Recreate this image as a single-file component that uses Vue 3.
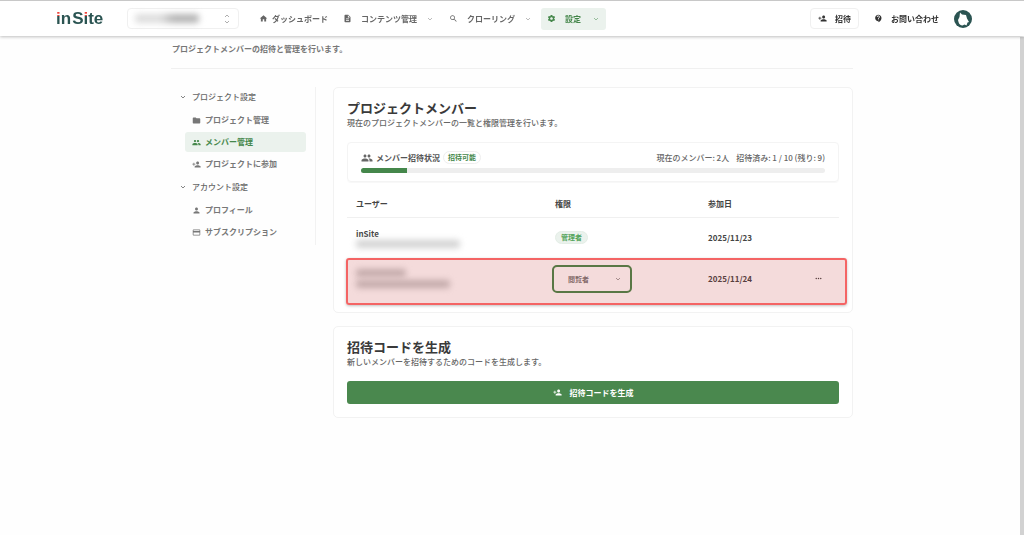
<script setup>
import { ref } from 'vue'

const icons = {
  home: 'M10 20v-6h4v6h5v-8h3L12 3 2 12h3v8z',
  doc: 'M14 2H6c-1.1 0-2 .9-2 2v16c0 1.1.9 2 2 2h12c1.1 0 2-.9 2-2V8l-6-6zm2 16H8v-2h8v2zm0-4H8v-2h8v2zm-3-5V3.5L18.5 9H13z',
  search: 'M15.5 14h-.79l-.28-.27C15.41 12.59 16 11.11 16 9.5 16 5.91 13.09 3 9.5 3S3 5.91 3 9.5 5.91 16 9.5 16c1.61 0 3.09-.59 4.23-1.57l.27.28v.79l5 4.99L20.49 19l-4.99-5zm-6 0C7.01 14 5 11.99 5 9.5S7.01 5 9.5 5 14 7.01 14 9.5 11.99 14 9.5 14z',
  gear: 'M19.14 12.94c.04-.3.06-.61.06-.94 0-.32-.02-.64-.07-.94l2.03-1.58c.18-.14.23-.41.12-.61l-1.92-3.32c-.12-.22-.37-.29-.59-.22l-2.39.96c-.5-.38-1.03-.7-1.62-.94l-.36-2.54c-.04-.24-.24-.41-.48-.41h-3.84c-.24 0-.43.17-.47.41l-.36 2.54c-.59.24-1.13.57-1.62.94l-2.39-.96c-.22-.08-.47 0-.59.22L2.74 8.87c-.12.21-.08.47.12.61l2.03 1.58c-.05.3-.09.63-.09.94s.02.64.07.94l-2.03 1.58c-.18.14-.23.41-.12.61l1.92 3.32c.12.22.37.29.59.22l2.39-.96c.5.38 1.03.7 1.62.94l.36 2.54c.05.24.24.41.48.41h3.84c.24 0 .44-.17.47-.41l.36-2.54c.59-.24 1.13-.56 1.62-.94l2.39.96c.22.08.47 0 .59-.22l1.92-3.32c.12-.22.07-.47-.12-.61l-2.01-1.58zM12 15.6c-1.98 0-3.6-1.62-3.6-3.6s1.62-3.6 3.6-3.6 3.6 1.62 3.6 3.6-1.62 3.6-3.6 3.6z',
  folder: 'M10 4H4c-1.1 0-2 .9-2 2v12c0 1.1.9 2 2 2h16c1.1 0 2-.9 2-2V8c0-1.1-.9-2-2-2h-8l-2-2z',
  group: 'M16 11c1.66 0 2.99-1.34 2.99-3S17.66 5 16 5s-3 1.34-3 3 1.34 3 3 3zm-8 0c1.66 0 2.99-1.34 2.99-3S9.66 5 8 5 5 6.34 5 8s1.34 3 3 3zm0 2c-2.33 0-7 1.17-7 3.5V19h14v-2.5c0-2.33-4.67-3.5-7-3.5zm8 0c-.29 0-.62.02-.97.05 1.16.84 1.97 1.97 1.97 3.45V19h6v-2.5c0-2.33-4.67-3.5-7-3.5z',
  add: 'M15 12c2.21 0 4-1.79 4-4s-1.79-4-4-4-4 1.79-4 4 1.79 4 4 4zm-9-2V7H4v3H1v2h3v3h2v-3h3v-2H6zm9 4c-2.67 0-8 1.34-8 4v2h16v-2c0-2.66-5.33-4-8-4z',
  person: 'M12 12c2.21 0 4-1.79 4-4s-1.79-4-4-4-4 1.79-4 4 1.79 4 4 4zm0 2c-2.67 0-8 1.34-8 4v2h16v-2c0-2.66-5.33-4-8-4z',
  card: 'M20 4H4c-1.11 0-2 .89-2 2v12c0 1.11.89 2 2 2h16c1.11 0 2-.89 2-2V6c0-1.11-.89-2-2-2zm0 14H4v-6h16v6zm0-10H4V6h16v2z',
  help: 'M11.5 2C6.81 2 3 5.81 3 10.5S6.81 19 11.5 19h.5v3c4.86-2.34 8-7 8-11.5C20 5.81 16.19 2 11.5 2zm1 14.5h-2v-2h2v2zm0-3.5h-2c0-3.25 3-3 3-5 0-1.1-.9-2-2-2s-2 .9-2 2h-2c0-2.21 1.79-4 4-4s4 1.79 4 4c0 2.5-3 2.75-3 5z',
  more: 'M6 10c-1.1 0-2 .9-2 2s.9 2 2 2 2-.9 2-2-.9-2-2-2zm12 0c-1.1 0-2 .9-2 2s.9 2 2 2 2-.9 2-2-.9-2-2-2zm-6 0c-1.1 0-2 .9-2 2s.9 2 2 2 2-.9 2-2-.9-2-2-2z',
}

const nav = [
  { label: 'コンテンツ管理', icon: 'doc' },
  { label: 'クローリング', icon: 'search' },
  { label: '設定', icon: 'gear', active: true },
]

const groups = [
  {
    label: 'プロジェクト設定',
    items: [
      { label: 'プロジェクト管理', icon: 'folder' },
      { label: 'メンバー管理', icon: 'group', active: true },
      { label: 'プロジェクトに参加', icon: 'add' },
    ],
  },
  {
    label: 'アカウント設定',
    items: [
      { label: 'プロフィール', icon: 'person' },
      { label: 'サブスクリプション', icon: 'card' },
    ],
  },
]

const invited = 1
const limit = 10
const role = ref('閲覧者')
</script>

<template>
  <div class="page">
    <header class="topbar">
      <a class="logo" href="#"><span class="dot">i</span>n<span class="cap">S</span><span class="dot">i</span>te</a>
      <button class="picker" type="button" aria-label="プロジェクト">
        <span class="masked"></span>
        <svg class="updown" viewBox="0 0 8 12"><path d="M2 4l2-2 2 2M2 8l2 2 2-2" /></svg>
      </button>
      <nav class="nav">
        <a class="nav-item home" href="#">
          <svg class="icon" viewBox="0 0 24 24"><path :d="icons.home" /></svg>ダッシュボード
        </a>
        <button v-for="n in nav" :key="n.label" class="nav-item" :class="{ active: n.active }" type="button">
          <svg class="icon" viewBox="0 0 24 24"><path :d="icons[n.icon]" /></svg>{{ n.label }}
          <svg class="chevron" viewBox="0 0 8 8"><path d="M2 3l2 2 2-2" /></svg>
        </button>
      </nav>
      <div class="actions">
        <button class="invite" type="button">
          <svg class="icon" viewBox="0 0 24 24"><path :d="icons.add" /></svg>招待
        </button>
        <a class="contact" href="#">
          <svg class="icon" viewBox="0 0 24 24"><path :d="icons.help" /></svg>お問い合わせ
        </a>
        <button class="avatar" type="button" aria-label="アカウント">
          <svg viewBox="0 0 18 18">
            <circle cx="9" cy="9" r="9" fill="#2b5452" />
            <path d="M6 2.5L8 4.5 12 5 13 8.500 15 12 13.500 12.500 12.500 15.500 10.500 14.500 8.500 15.500C6.500 15.500 5 14 4.500 12L4 10 5.500 7z" fill="#fff" />
          </svg>
        </button>
      </div>
    </header>

    <div class="container">
      <p class="lead">プロジェクトメンバーの招待と管理を行います。</p>
      <div class="columns">
        <aside class="sidebar">
          <section v-for="g in groups" :key="g.label" class="group">
            <button class="group-head" type="button">
              <svg class="chevron" viewBox="0 0 8 8"><path d="M2 3l2 2 2-2" /></svg>{{ g.label }}
            </button>
            <a v-for="i in g.items" :key="i.label" class="side-item" :class="{ active: i.active }" href="#">
              <svg class="icon" viewBox="0 0 24 24"><path :d="icons[i.icon]" /></svg>{{ i.label }}
            </a>
          </section>
        </aside>

        <main class="main">
          <section class="card">
            <h2>プロジェクトメンバー</h2>
            <p class="sub">現在のプロジェクトメンバーの一覧と権限管理を行います。</p>
            <div class="status">
              <div class="status-row">
                <svg class="icon large" viewBox="0 0 24 24"><path :d="icons.group" /></svg>
                <span class="status-title">メンバー招待状況</span>
                <span class="chip outline">招待可能</span>
                <span class="counts"><span>現在のメンバー: 2人</span><span>招待済み: {{ invited }} / {{ limit }} (残り: {{ limit - invited }})</span></span>
              </div>
              <div class="track"><div class="fill" :style="{ width: (invited / limit) * 100 + '%' }"></div></div>
            </div>
            <table>
              <thead>
                <tr><th class="c-user">ユーザー</th><th class="c-role">権限</th><th>参加日</th><th class="c-menu"></th></tr>
              </thead>
              <tbody>
                <tr>
                  <td><div class="name">inSite</div><div class="masked mail"></div></td>
                  <td><span class="chip solid">管理者</span></td>
                  <td>2025/11/23</td>
                  <td></td>
                </tr>
                <tr class="marked">
                  <td><div class="masked short"></div><div class="masked mail2"></div></td>
                  <td class="role-cell">
                    <div class="role">
                      <select v-model="role" aria-label="権限"><option>閲覧者</option><option>管理者</option></select>
                      <svg class="chevron" viewBox="0 0 8 8"><path d="M2 3l2 2 2-2" /></svg>
                    </div>
                  </td>
                  <td>2025/11/24</td>
                  <td class="c-menu">
                    <button class="more" type="button" aria-label="メニュー"><svg class="icon" viewBox="0 0 24 24"><path :d="icons.more" /></svg></button>
                  </td>
                </tr>
              </tbody>
            </table>
          </section>

          <section class="card">
            <h2>招待コードを生成</h2>
            <p class="sub">新しいメンバーを招待するためのコードを生成します。</p>
            <button class="primary" type="button">
              <svg class="icon" viewBox="0 0 24 24"><path :d="icons.add" /></svg>招待コードを生成
            </button>
          </section>
        </main>
      </div>
    </div>
    <div class="scrollbar"></div>
  </div>
</template>

<style>
body { background: #fefefe; }
</style>

<style scoped>
.page {
  font-family: "Noto Sans CJK JP", "Noto Sans", sans-serif;
  font-size: 8px;
  line-height: 12px;
  font-weight: 500;
  color: #666;
}
.page * { box-sizing: border-box; }
button, select { font: inherit; color: inherit; background: none; border: 0; padding: 0; margin: 0; text-align: left; }
a { color: inherit; text-decoration: none; }
h2, p { margin: 0; }
svg { display: block; flex: none; }
.icon { width: 9px; height: 9px; fill: currentColor; }
.icon.large { width: 12px; height: 12px; }
.chevron { width: 8px; height: 8px; fill: none; stroke: currentColor; stroke-width: 0.8; }

.topbar {
  position: sticky;
  top: 0;
  z-index: 2;
  display: flex;
  align-items: center;
  height: 36px;
  padding: 0 52px 0 56px;
  background: #fff;
  border-top: 1px solid #c8c8c8;
  box-shadow: 0 1px 3px rgba(0, 0, 0, 0.25);
}
.logo {
  width: 71px;
  font: bold 17px/20px "Liberation Sans", Arial, sans-serif;
  color: #2b5452;
}
.dot {
  color: transparent;
  background: linear-gradient(#f0453c 7px, #2b5452 7px);
  background-clip: text;
}
.cap { margin-left: 1px; }
.picker {
  display: flex;
  align-items: center;
  justify-content: space-between;
  width: 112px;
  height: 21px;
  padding: 0 7px;
  border: 1px solid #f0f0f0;
  border-radius: 4px;
}
.masked { height: 8px; border-radius: 3px; background: #c4c4c4; filter: blur(3px); }
.picker .masked { width: 64px; height: 9px; background: linear-gradient(90deg, #ddd 40%, #b4b4b4 60%); }
.updown { width: 8px; height: 12px; fill: none; stroke: #999; stroke-width: 0.8; }
.nav { display: flex; gap: 3px; margin-left: 15px; }
.nav-item {
  display: flex;
  align-items: center;
  gap: 9px;
  height: 22px;
  padding: 0 6px;
  border-radius: 3px;
  font-weight: 700;
  white-space: nowrap;
}
.nav-item.home { gap: 4px; padding-left: 5px; }
.nav-item .chevron { margin-left: auto; color: #aaa; }
.nav-item.active { min-width: 65px; background: #ebf2ed; color: #45874b; }
.nav-item.active .chevron { color: #80b085; }
.actions { display: flex; align-items: center; margin-left: auto; color: #333; font-weight: 700; white-space: nowrap; }
.invite, .contact { display: flex; align-items: center; gap: 8px; }
.invite { height: 21px; padding: 0 7px; border: 1px solid #f0f0f0; border-radius: 4px; }
.contact { margin: 0 15px; }
.avatar, .avatar svg { width: 18px; height: 18px; }

.container { max-width: 682px; margin: 0 auto; }
.lead { padding: 7px 1px 13px; border-bottom: 1px solid #f0f0f0; font-weight: 700; color: #777; }
.columns { display: flex; gap: 17px; padding-top: 18px; }
.sidebar { flex: 0 0 145px; align-self: flex-start; padding: 0 9px 0 8px; border-right: 1px solid #f2f2f2; }
.group { display: flex; flex-direction: column; gap: 2px; padding-bottom: 3px; }
.group-head { display: flex; align-items: center; gap: 5px; height: 20px; margin-bottom: 1px; }
.side-item {
  display: flex;
  align-items: center;
  gap: 4px;
  height: 20px;
  margin-left: 6px;
  padding-left: 7px;
  border-radius: 3px;
  font-weight: 700;
  color: #777;
}
.side-item.active { background: #ebf2ed; color: #45874b; }

.main { flex: 1; min-width: 0; display: flex; flex-direction: column; gap: 13px; }
.card { padding: 11px 13px 13px; border: 1px solid #f2f2f2; border-radius: 5px; background: #fff; }
h2 { font-size: 13px; line-height: 18px; font-weight: 700; color: #3a3a3a; }
.sub { color: #666; }
.status {
  margin-top: 13px;
  padding: 8px 13px;
  border: 1px solid #f4f4f4;
  border-radius: 4px;
  box-shadow: 0 1px 1px rgba(0, 0, 0, 0.03);
}
.status-row { display: flex; align-items: center; height: 13px; margin-bottom: 4px; }
.status-title { margin: 0 3px 0 3px; font-weight: 700; color: #555; }
.chip { display: inline-block; padding: 0 5px; border: 1px solid #eee; border-radius: 7px; font-size: 7px; line-height: 11px; font-weight: 700; color: #45874b; }
.chip.outline { padding: 0 4px; }
.chip.solid { background: #ebf2ed; border-color: #e4eee6; color: #55a55c; }
.counts { display: flex; gap: 7px; margin-left: auto; }
.track { height: 5px; border-radius: 3px; background: #eee; overflow: hidden; }
.fill { height: 5px; background: #45874b; }

table { width: 100%; border-collapse: collapse; table-layout: fixed; color: #444; font-weight: 700; }
th { height: 35px; padding: 9px 9px 0; text-align: left; font-weight: 700; border-bottom: 1px solid #f0f0f0; }
td { height: 41px; padding: 0 9px; vertical-align: middle; }
.c-user { width: 199px; }
.c-role { width: 153px; }
th.c-menu { width: 34px; padding: 0; }
.masked.mail { width: 104px; background: #d2d2d2; }
.masked.short { width: 50px; }
.masked.mail2 { width: 94px; margin-top: 3px; }
.marked { position: relative; }
.marked .c-menu::after {
  content: "";
  position: absolute;
  inset: 0 -8px -6px -1px;
  border: 2px solid #f46464;
  border-radius: 3px;
  background: rgba(190, 40, 40, 0.17);
  box-shadow: 0 1px 3px rgba(0, 0, 0, 0.25);
  pointer-events: none;
}
td.role-cell { padding-left: 6px; }
.role { position: relative; width: 80px; }
.role select {
  appearance: none;
  width: 100%;
  height: 28px;
  padding: 0 20px 0 14px;
  border: 2px solid #45874b;
  border-radius: 5px;
  font-size: 7px;
  color: #777;
}
.role .chevron { position: absolute; right: 10px; top: 10px; color: #888; pointer-events: none; }
td.c-menu { padding: 0; }
.more { display: block; margin-left: 9px; }

.primary {
  display: flex;
  align-items: center;
  justify-content: center;
  gap: 8px;
  width: 100%;
  height: 23px;
  margin-top: 13px;
  border-radius: 3px;
  background: #4a884e;
  color: #fff;
  font-weight: 700;
}
.scrollbar { position: fixed; right: 0; top: 37px; bottom: 0; width: 4px; background: #d2d2d2; }
</style>
